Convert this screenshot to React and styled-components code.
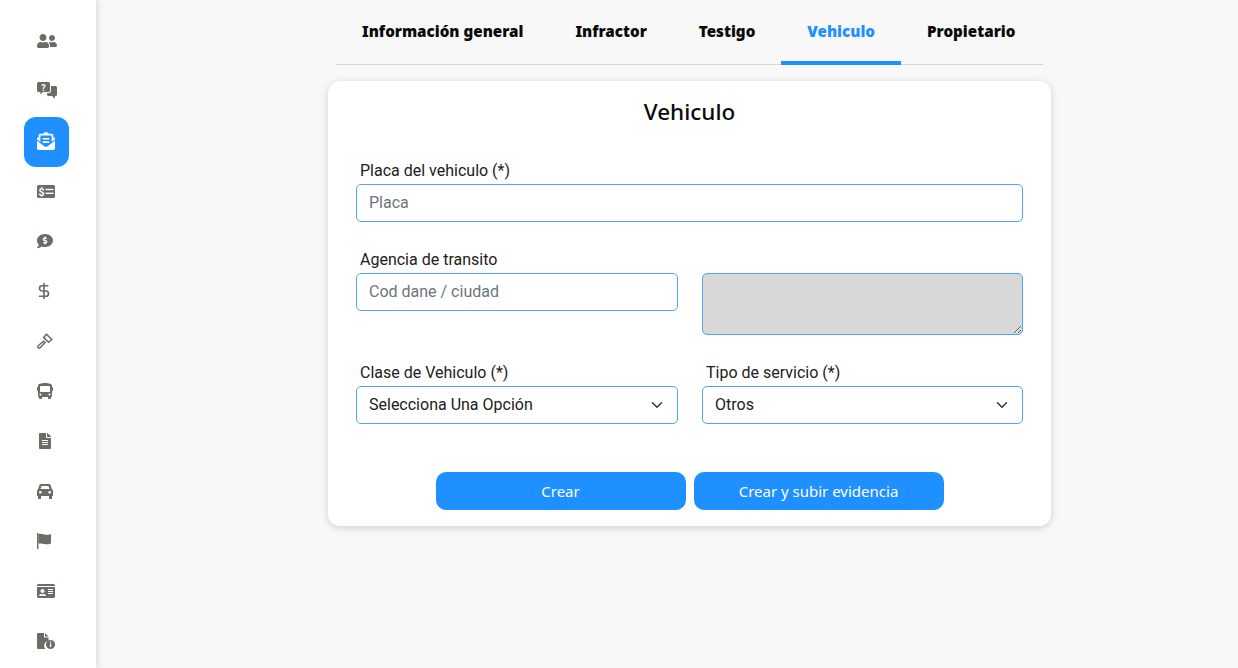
import styled, { createGlobalStyle } from "styled-components";
import {
  FaUserFriends,
  FaEnvelopeOpenText,
  FaCommentDollar,
  FaBus,
  FaFileAlt,
  FaIdCard,
} from "react-icons/fa";
import { DollarSign } from "lucide-react";

const GlobalStyle = createGlobalStyle`
  * { box-sizing: border-box; }
  body {
    margin: 0;
    font-family: Roboto, "Liberation Sans", sans-serif;
    background: #f8f8f8;
  }
`;

function QuestionChatIcon() {
  return (
    <svg width="20" height="18" viewBox="0 0 20 18" fill="currentColor">
      <path d="M1.5 0h10A1.5 1.5 0 0 1 13 1.5v7A1.5 1.5 0 0 1 11.5 10H6l-2.6 2.4V10H1.5A1.5 1.5 0 0 1 0 8.500v-7A1.5 1.5 0 0 1 1.5 0z" />
      <path d="M14 4h4.500A1.500 1.500 0 0 1 20 5.500v7a1.500 1.500 0 0 1-1.500 1.500H18v2.800L15 14h-3.500A1.500 1.500 0 0 1 10 12.500V11h2a2 2 0 0 0 2-2z" />
      <text x="6.500" y="8.500" fontSize="9" fontWeight="700" textAnchor="middle" fill="#fff" fontFamily="Roboto, sans-serif">?</text>
    </svg>
  );
}

function MoneyLinesIcon() {
  return (
    <svg width="18" height="13" viewBox="0 0 18 13" fill="currentColor">
      <rect width="18" height="13" rx="1.500" />
      <text x="4.500" y="10.500" fontSize="10.500" fontWeight="700" textAnchor="middle" fill="#fff" fontFamily="Roboto, sans-serif">$</text>
      <rect x="8.500" y="3.800" width="8" height="1.400" fill="#fff" />
      <rect x="8.500" y="7.600" width="8" height="1.400" fill="#fff" />
    </svg>
  );
}

function GavelIcon() {
  return (
    <svg width="16" height="16" viewBox="0 0 16 16" fill="none" stroke="currentColor" strokeWidth="1.500">
      <path d="M9.500 1.200l5.300 5.300-3.300 2.800-4.900-4.900z" />
      <path d="M6.500 8.200L1.200 12.800a1.300 1.300 0 0 0 1.900 1.900l5-5.100z" />
    </svg>
  );
}

function CarIcon() {
  return (
    <svg width="16" height="15" viewBox="0 0 16 15" fill="currentColor">
      <path d="M4.300 0h7.400c.9 0 1.600.5 1.900 1.300L15 5.200c.6.400 1 1 1 1.800v5H0V7c0-.8.400-1.400 1-1.800l1.400-3.900C2.700.5 3.400 0 4.300 0zm.3 2L3.500 5h9l-1.100-3z" fillRule="evenodd" />
      <rect x="1" y="11" width="3" height="4" rx=".6" />
      <rect x="12" y="11" width="3" height="4" rx=".6" />
      <circle cx="3.300" cy="8.300" r="1.300" fill="#fff" />
      <circle cx="12.700" cy="8.300" r="1.300" fill="#fff" />
    </svg>
  );
}

function FlagIcon() {
  return (
    <svg width="15" height="16" viewBox="0 0 15 16" fill="currentColor">
      <rect x="0" y="0" width="1.400" height="16" />
      <path d="M1.400 1c2.200-.8 4 .2 6 .6 2 .4 3.800.3 6.600-.6v9.500c-2.800 1-4.600 1-6.600.5-2-.5-3.800-1-6-.2z" />
    </svg>
  );
}

function FileInfoIcon() {
  return (
    <svg width="19" height="17" viewBox="0 0 19 17" fill="currentColor">
      <path d="M1 0h6v4.500h4.500v3.200A5 5 0 0 0 8.400 16H1a1 1 0 0 1-1-1V1a1 1 0 0 1 1-1z" />
      <path d="M8 0l3.500 3.500H8z" />
      <circle cx="13.500" cy="11.500" r="4.500" />
      <rect x="12.900" y="10.500" width="1.300" height="3.600" fill="#fff" />
      <rect x="12.900" y="8.500" width="1.300" height="1.300" fill="#fff" />
    </svg>
  );
}

const menuIcons = [
  <FaUserFriends size={20} />,
  <QuestionChatIcon />,
  <FaEnvelopeOpenText size={18} />,
  <MoneyLinesIcon />,
  <FaCommentDollar size={16} />,
  <DollarSign size={18} strokeWidth={2.200} style={{ marginLeft: -2 }} />,
  <GavelIcon />,
  <FaBus size={16} />,
  <FaFileAlt size={16} />,
  <CarIcon />,
  <FlagIcon />,
  <FaIdCard size={18} />,
  <FileInfoIcon />,
];

const tabs = ["Información general", "Infractor", "Testigo", "Vehiculo", "Propietario"];

export default function App() {
  return (
    <>
      <GlobalStyle />
      <Page>
        <Sidebar>
          {menuIcons.map((icon, i) => (
            <MenuItem key={i} $active={i === 2}>
              {icon}
            </MenuItem>
          ))}
        </Sidebar>
        <Main>
          <Tabs>
            {tabs.map((tab) => (
              <Tab key={tab} $active={tab === "Vehiculo"}>
                {tab}
              </Tab>
            ))}
          </Tabs>
          <Card>
            <Title>Vehiculo</Title>
            <PlateField>
              <Label>Placa del vehiculo (*)</Label>
              <Input placeholder="Placa" />
            </PlateField>
            <AgencyRow>
              <div>
                <Label>Agencia de transito</Label>
                <Input placeholder="Cod dane / ciudad" />
              </div>
              <AgencyName disabled />
            </AgencyRow>
            <SelectRow>
              <div>
                <Label>Clase de Vehiculo (*)</Label>
                <Select defaultValue="">
                  <option value="">Selecciona Una Opción</option>
                </Select>
              </div>
              <div>
                <Label>Tipo de servicio (*)</Label>
                <Select defaultValue="otros">
                  <option value="otros">Otros</option>
                </Select>
              </div>
            </SelectRow>
            <Actions>
              <ActionButton>Crear</ActionButton>
              <ActionButton>Crear y subir evidencia</ActionButton>
            </Actions>
          </Card>
        </Main>
      </Page>
    </>
  );
}

const Page = styled.div`
  display: flex;
  height: 668px;
  overflow: hidden;
`;

const Sidebar = styled.nav`
  width: 96px;
  flex-shrink: 0;
  padding: 17px 0 0 24px;
  background: #fff;
  box-shadow: 2px 0 6px rgba(0, 0, 0, 0.12);
`;

const MenuItem = styled.div`
  width: 45px;
  height: 50px;
  padding: 0 0 2px 12.5px;
  display: flex;
  align-items: center;
  border-radius: 12px;
  color: ${(p) => (p.$active ? "#fff" : "#6c6b64")};
  background: ${(p) => (p.$active ? "#1e90ff" : "transparent")};
`;

const Main = styled.main`
  flex: 1;
  padding-left: 232px;
`;

const Tabs = styled.div`
  width: 707px;
  margin-left: 8px;
  display: flex;
  height: 65px;
  border-bottom: 1px solid #d6d6d6;
`;

const Tab = styled.div`
  height: 65px;
  padding: 0 26px;
  display: flex;
  align-items: center;
  font-family: "Noto Sans", Roboto, sans-serif;
  font-size: 15.2px;
  font-weight: 900;
  white-space: nowrap;
  color: ${(p) => (p.$active ? "#1e90ff" : "#0a0a0a")};
  border-bottom: 4px solid ${(p) => (p.$active ? "#1e90ff" : "transparent")};
`;

const Card = styled.section`
  width: 723px;
  height: 445px;
  margin-top: 16px;
  padding: 16px 28px 0;
  background: #fff;
  border-radius: 12px;
  box-shadow: 0 2px 8px rgba(0, 0, 0, 0.16);
`;

const Title = styled.h1`
  margin: 0;
  height: 30px;
  line-height: 30px;
  text-align: center;
  font-family: "Noto Sans", "Open Sans", sans-serif;
  font-size: 22.5px;
  font-weight: 500;
  color: #0a0a0a;
`;

const Label = styled.label`
  display: block;
  height: 24px;
  line-height: 24px;
  padding-left: 4px;
  margin-top: -1px;
  margin-bottom: 1px;
  font-size: 16px;
  color: #212121;
`;

const Input = styled.input`
  display: block;
  width: 100%;
  height: 38px;
  padding: 0 12px 2px;
  font-family: inherit;
  font-size: 16px;
  color: #212121;
  background: #fff;
  border: 1px solid #4ea5f7;
  border-radius: 5px;
  outline: none;

  &::placeholder {
    color: #6c757d;
    opacity: 1;
  }
`;

const PlateField = styled.div`
  margin-top: 33px;
`;

const TwoColumns = styled.div`
  display: grid;
  grid-template-columns: 322px 321px;
  column-gap: 24px;
`;

const AgencyRow = styled(TwoColumns)`
  margin-top: 27px;
`;

const AgencyName = styled.textarea`
  display: block;
  width: 100%;
  height: 62px;
  margin-top: 24px;
  background: #d8d8d6;
  border: 1px solid #4ea5f7;
  border-radius: 5px;
  outline: none;
`;

const SelectRow = styled(TwoColumns)`
  margin-top: 27px;
`;

const Select = styled.select`
  display: block;
  width: 100%;
  height: 38px;
  padding: 0 36px 2px 12px;
  appearance: none;
  font-family: inherit;
  font-size: 16px;
  color: #212121;
  background: #fff
    url("data:image/svg+xml,%3csvg xmlns='http://www.w3.org/2000/svg' viewBox='0 0 16 16'%3e%3cpath fill='none' stroke='%23343a40' stroke-linecap='round' stroke-linejoin='round' stroke-width='2' d='M2 5l6 6 6-6'/%3e%3c/svg%3e")
    no-repeat right 14px center / 12px 12px;
  border: 1px solid #4ea5f7;
  border-radius: 5px;
  outline: none;
`;

const Actions = styled.div`
  display: flex;
  justify-content: center;
  gap: 8px;
  margin-top: 48px;
`;

const ActionButton = styled.button`
  width: 250px;
  height: 38px;
  border: none;
  border-radius: 10px;
  background: #1e90ff;
  color: #fff;
  font-family: "Noto Sans", "Open Sans", sans-serif;
  font-size: 15px;
`;
